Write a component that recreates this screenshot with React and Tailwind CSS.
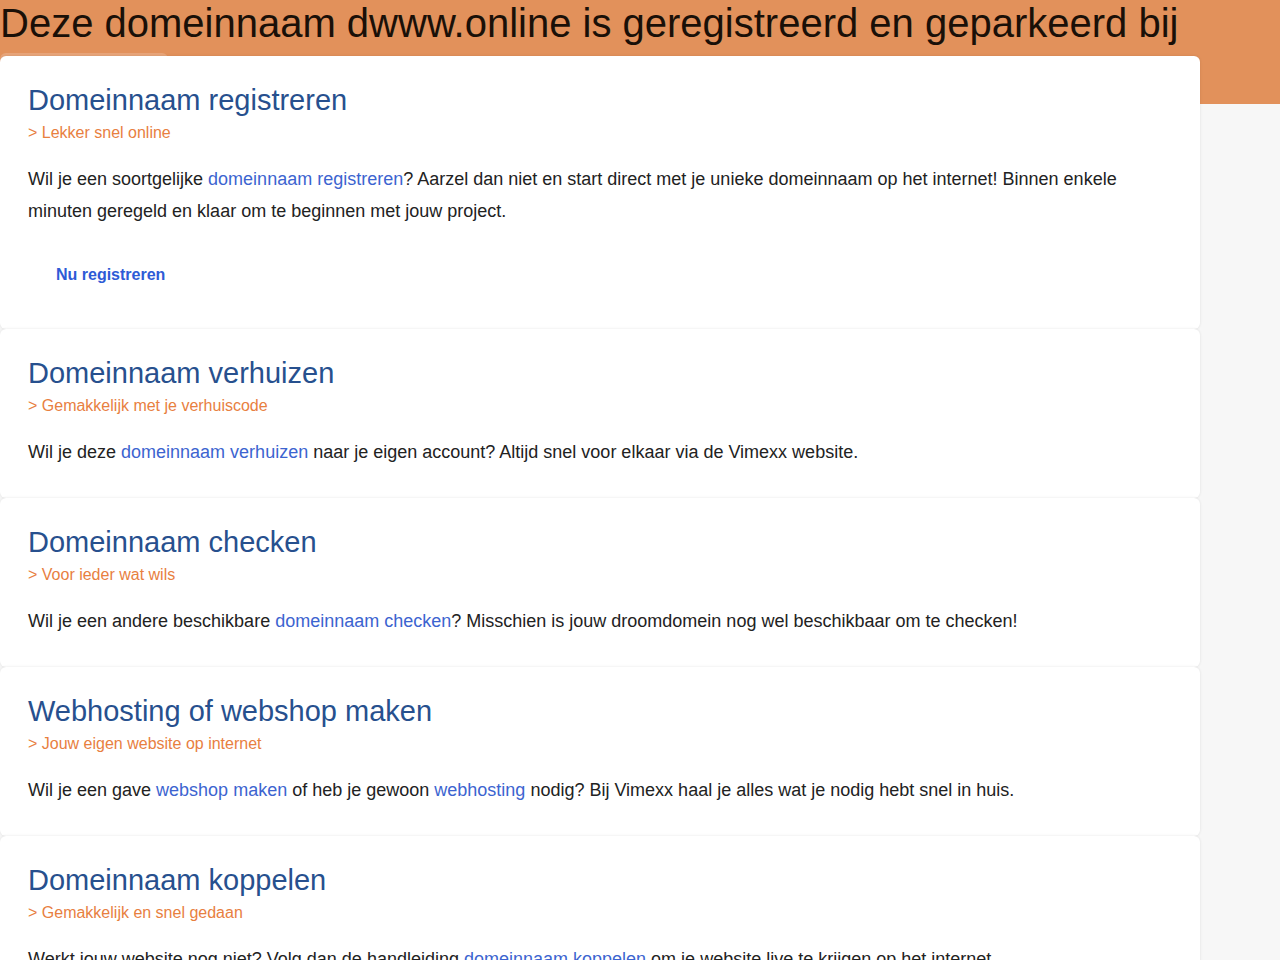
import React from "react";

const cards = [
  {
    title: "Domeinnaam registreren",
    sub: "Lekker snel online",
    body: [
      "Wil je een soortgelijke ",
      { link: "domeinnaam registreren" },
      "? Aarzel dan niet en start direct met je unieke domeinnaam op het internet! Binnen enkele minuten geregeld en klaar om te beginnen met jouw project.",
    ],
    button: "Nu registreren",
  },
  {
    title: "Domeinnaam verhuizen",
    sub: "Gemakkelijk met je verhuiscode",
    body: [
      "Wil je deze ",
      { link: "domeinnaam verhuizen" },
      " naar je eigen account? Altijd snel voor elkaar via de Vimexx website.",
    ],
  },
  {
    title: "Domeinnaam checken",
    sub: "Voor ieder wat wils",
    body: [
      "Wil je een andere beschikbare ",
      { link: "domeinnaam checken" },
      "? Misschien is jouw droomdomein nog wel beschikbaar om te checken!",
    ],
  },
  {
    title: "Webhosting of webshop maken",
    sub: "Jouw eigen website op internet",
    body: [
      "Wil je een gave ",
      { link: "webshop maken" },
      " of heb je gewoon ",
      { link: "webhosting" },
      " nodig? Bij Vimexx haal je alles wat je nodig hebt snel in huis.",
    ],
  },
  {
    title: "Domeinnaam koppelen",
    sub: "Gemakkelijk en snel gedaan",
    body: [
      "Werkt jouw website nog niet? Volg dan de handleiding ",
      { link: "domeinnaam koppelen" },
      " om je website live te krijgen op het internet.",
    ],
  },
];

function Card({ card }) {
  return (
    <section className="relative z-10 rounded-md bg-white px-7 pt-6 pb-[30px] shadow-[0_0_3px_rgba(0,0,0,0.1)]">
      <h2 className="text-[29px] leading-[40px] text-[#27508e]">{card.title}</h2>
      <p className="mt-px text-base leading-6 text-[#e8803f]">&gt; {card.sub}</p>
      <p className="mt-[18px] text-lg leading-8 text-[#222]">
        {card.body.map((part, i) =>
          typeof part === "string" ? (
            <span key={i}>{part}</span>
          ) : (
            <a key={i} href="#" className="text-[#3c64d0]">{part.link}</a>
          )
        )}
      </p>
      {card.button && (
        <button className="mt-6 h-12 px-7 text-base font-bold text-[#2e5bd6]">{card.button}</button>
      )}
    </section>
  );
}

export default function App() {
  return (
    <div className="min-h-[960px] bg-[#f7f7f7] font-['Liberation_Sans',Arial,sans-serif]">
      <header className="h-[104px] overflow-hidden bg-[#e2915b]">
        <h1 className="text-[40px] leading-[46px] text-[#1a1008]">
          Deze domeinnaam dwww.online is geregistreerd en geparkeerd bij
        </h1>
        <div className="mt-[7px] h-2 w-[168px] rounded-t-md bg-[#e8a57a]" />
      </header>
      <main className="-mt-12 w-[1200px]">
        {cards.map((card) => (
          <Card key={card.title} card={card} />
        ))}
      </main>
    </div>
  );
}
